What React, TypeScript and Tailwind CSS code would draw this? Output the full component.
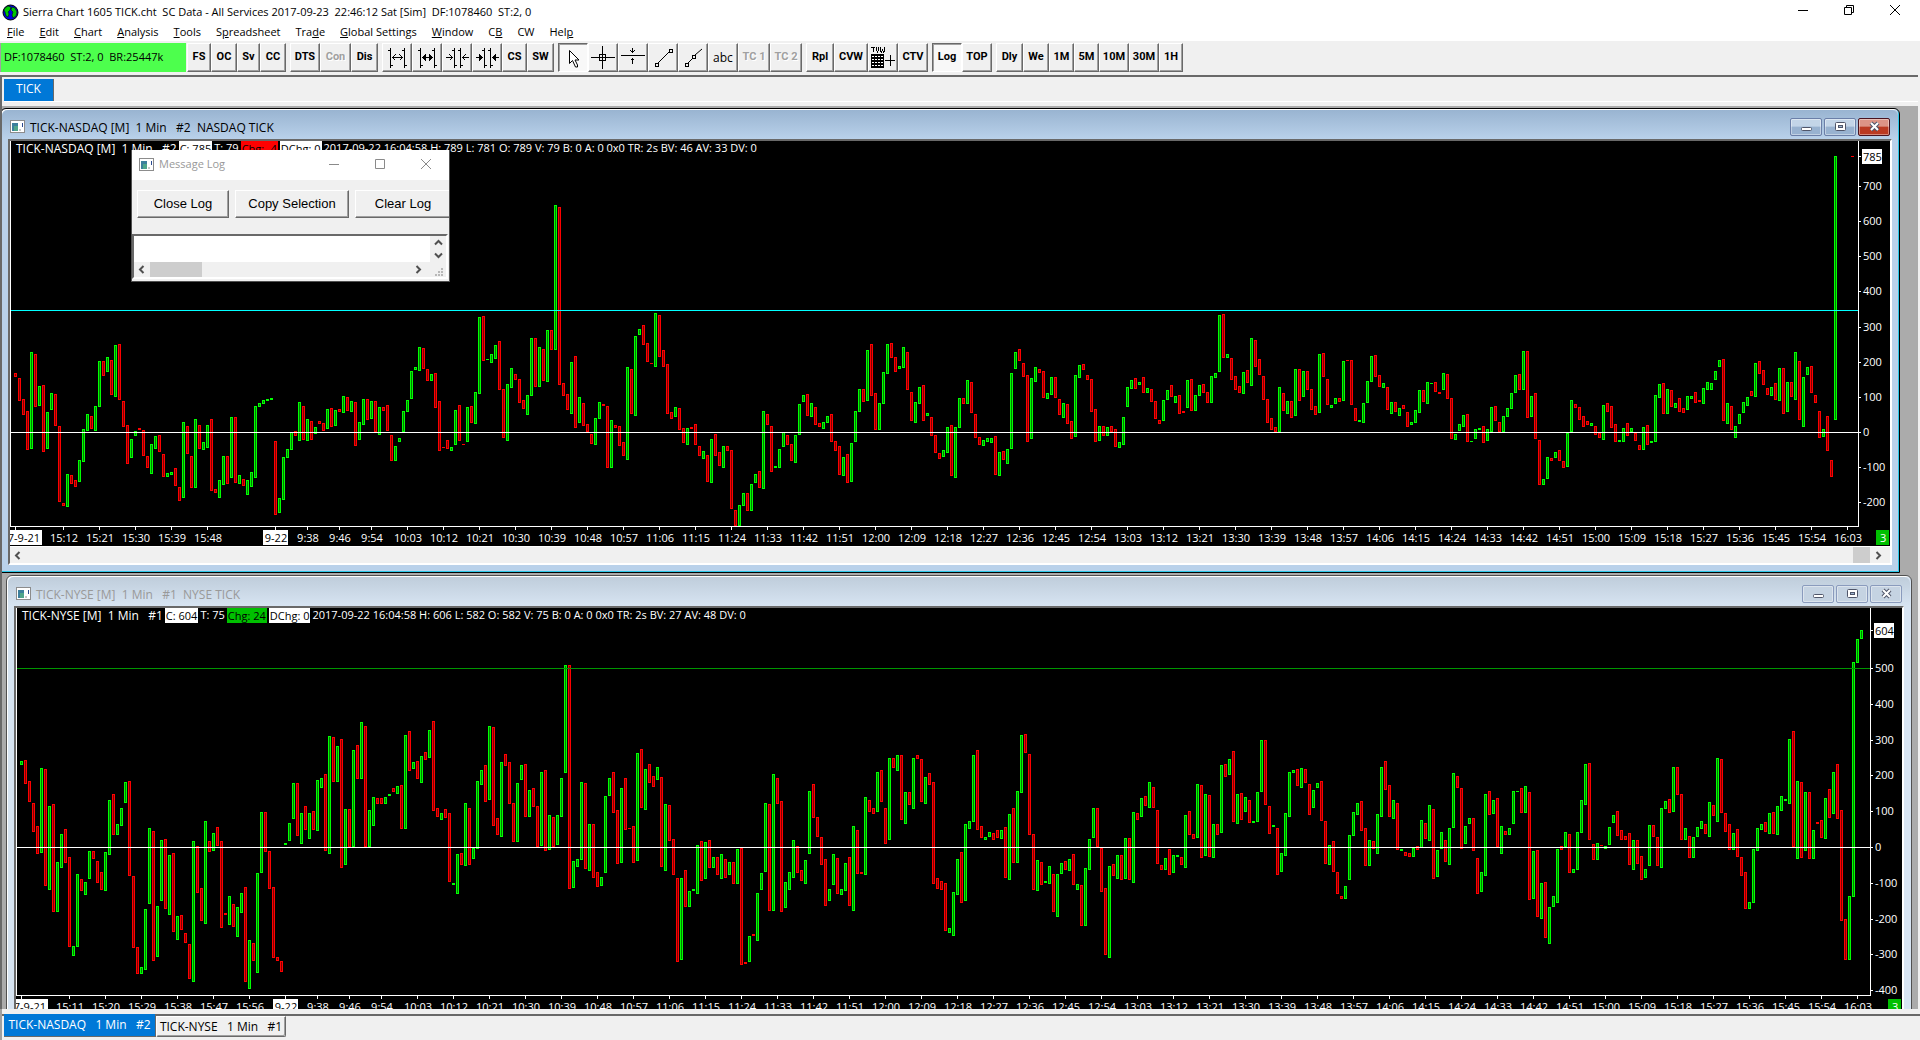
import type { ReactNode } from 'react'

type Session = { zero: number; bars: string }
type Label = { at: number; text: string; boxed?: boolean }

// Each bar is colour + high:low in thirds of a pixel, measured against the zero level of its session
const nasdaq: Session[] = [
  {
    zero: 396,
    bars: `r219:231 r234:303 r297:345 r333:450 g156:447 r162:321 g258:318 r255:456 g336:447 g279:330
      r282:378 r378:606 r609:618 g522:621 r525:552 r540:561 g480:546 g387:486 g342:393 r348:387
      g318:393 g183:321 r183:228 g171:216 r180:285 g135:291 r132:300 r303:381 r375:492 g417:474
      g393:408 r384:390 r390:468 r468:504 g432:522 g408:447 r405:456 r462:531 g519:531 g516:525
      r504:558 r561:603 g366:594 r378:462 r468:564 g357:564 r375:447 g426:450 g375:444 r357:573
      r567:579 g540:594 g468:555 r468:552 g351:534 r351:549 g525:552 r537:558 g540:585 g516:561
      g318:534 g309:321 g300:312 g297:303 g294:300 r423:645 g594:639 g471:600 g447:474 g396:450
      r393:408 g306:423 r318:420 g357:423 r363:420 g381:402 r363:372 r369:393 g327:387 r324:381
      g330:378 r327:336 g288:339 r291:333 g303:336 r306:438 g366:420 g297:375 r297:360 g303:357
      r303:396 g321:405 r321:333 r315:393 r405:483 g438:483 g414:426 g333:396 g300:336 g213:297
      g201:210 g141:213 r144:207 r207:243 g222:243 r219:324 r303:453 r441:444 r420:447 g441:453
      g330:435 r315:423 r432:435 g321:426 r318:369 g276:372 g51:282 r48:183`,
  },
  {
    zero: 726,
    bars: `g507:510 g492:519 g465:507 r453:600 r597:744 g582:753 g534:594 r552:570 r567:639 r630:657
      g615:675 g444:618 r444:591 g471:591 r477:573 g420:576 r420:480 g45:480 r51:585 r579:618
      r612:660 g516:672 r498:714 g621:699 r639:708 r702:726 r732:762 g684:765 g636:687 r642:648
      r648:834 g690:834 r705:714 r708:768 r756:798 g531:810 r537:672 g438:678 g417:435 r405:465
      r459:516 r519:522 g369:531 r375:501 r480:531 r522:672 r666:687 g651:681 r654:720 r714:759
      g714:765 r711:717 r702:765 r768:798 g783:807 r795:876 g747:879 r732:798 r786:828 g768:834
      r768:783 r780:957 r960:1008 g945:1008 g909:948 r909:963 g882:963 g852:879 r843:894 g663:897
      r672:705 r708:846 g828:834 g777:834 g726:771 r735:765 r762:813 g735:819 g642:735 g615:636
      r612:678 g639:681 r651:705 r699:711 g696:717 g678:699 r672:756 r753:783 r768:855 g801:858
      r792:879 g759:876 g663:756 g597:666 r597:636 g480:633 r462:618 r609:720 g639:720 g546:642
      g462:552 r459:504 r501:546 g528:537 g471:534 r486:600 r606:693 g636:699 g591:642 r585:693
      g669:678 r681:738 r735:789 r789:807 g780:801 g711:789 r705:858 g711:864 g624:714`,
  },
  {
    zero: 426,
    bars: `r324:342 g270:342 r276:369 r372:444 r441:465 g450:468 g444:456 g444:459 r438:555 g486:558
      r483:510 g477:522 g249:477 g186:237 r177:213 r219:261 r255:456 g264:447 g231:276 r237:249
      r243:324 g309:327 g261:315 r261:324 r327:375 g339:384 r342:402 r393:447 g255:441 g225:264
      r222:240 r255:270 r267:366 r357:456 g408:453 r408:438 g411:438 r408:426 r417:471 g456:474
      g381:465 g291:351 g270:297 r264:297 g276:285 r261:309 g294:309 r297:336 r333:387 r390:402
      g330:393 g300:330 r285:321 g318:339 r315:372 r363:369 g270:354 r267:363 g315:363 g285:318
      r282:309 r306:339 g258:339 g249:264 g75:246 r72:204 g192:204 r204:270 r258:300 r288:309
      g246:312 r240:279 g144:288 r150:231 r207:255 r258:330 r327:399 r384:420 r411:426 g291:426
      r309:363 g333:372 r333:384 g237:378 r237:333 g243:321 r243:300 r297:360 r348:375 g192:369
      r189:261 r267:345 g345:354 g324:342 r324:336 g213:333 r210:213 r210:345 r354:393 g390:396
      g339:399 g273:339 g198:276 r195:261 r255:291 g279:294 r291:360 g336:372 r336:366 g354:378
      r345:357 r366:411 g396:405 g360:399 g300:369 r300:336 g276:342 g279:282 r276:306 r306:312
      g249:300 r252:327 r324:447 g432:450 g402:423 g375:411 r372:456 g453:456 g417:447 g414:420
      r408:459 g417:453 g351:426 r348:393 r396:426 g378:426 g354:381 g309:357 g255:309 r252:300
      g183:300 r183:384 g318:381 r309:447 r450:585 g567:585 g501:567 r504:513 g486:504 r480:513
      r513:534 g429:531 g330:426 r342:354 r351:390 r378:411 r393:405 g399:408 r408:435 r429:444
      g345:450 r339:366 r348:414 r402:456 g450:456 g414:456 r399:438 g414:426 r429:453 r465:480
      g411:480 r405:465 g453:459 g315:456 g282:324 r279:372 g297:372 r300:351 g339:354 r324:366
      r354:369 g318:360 g318:327 r306:339 r330:336 g294:342 g276:300 g279:300 g243:270 g210:231
      r207:393 g339:402 r348:420 g408:444 g372:402 g336:369 g321:348 r303:318 g219:321 r213:252
      r240:285 r294:315 g291:318 r279:330 g234:333 r234:372 g276:366 r276:321 g186:330 r213:390
      g261:411 g231:255 r228:309 r315:339 r363:444 g417:441 r378:483 r510:561 g-402:390`,
  },
]

const nyse: Session[] = [
  {
    zero: 471,
    bars: `g213:225 r210:282 r273:336 r339:426 r408:492 g234:489 r237:588 g348:600 r342:666 g516:666
      g432:534 r417:519 r501:771 g768:798 g552:771 r567:603 g576:615 g483:567 r483:507 r513:579
      r546:600 g486:603 g330:495 r312:435 g402:435 g354:408 g276:339 r273:558 r558:774 r771:852
      g831:852 g657:840 g414:642 r423:813 g648:801 g450:633 r447:657 g495:675 r489:726 g678:750
      r675:720 r729:759 r762:867 g453:876 r468:609 r594:693 g393:702 r453:486 g429:483 r411:468
      r453:714 r669:675 g618:705 r642:711 g651:741 g609:669 r591:876 g750:897 r759:813 g549:849
      g366:549 r366:486 r483:597 r591:804 r801:813 r813:846 g459:465 g399:453 g279:387 r279:438
      g369:462 r348:420 g369:447 r363:420 g270:423 g264:294 r252:483 g138:492 r141:276 g168:276
      r147:534 g357:525 r357:471 g180:471 r165:267 g96:267 r108:471 g360:471 g321:408 r324:342
      r324:342 g321:342 g312:318 r294:306 g288:312 r285:417 g135:417 r123:243 g216:237 r213:267
      g198:279 r186:210 g120:204 r93:363 r354:381 g369:390 r357:384 r369:576 g579:585 g492:612
      r489:525 g339:528 r354:525 g474:507 g273:477 g240:285`,
  },
  {
    zero: 591,
    bars: `r345:456 g228:450 r231:528 r504:555 g336:561 r312:348 r336:462 r459:576 g399:576 g345:390
      r342:501 g420:501 r414:471 r468:591 g366:588 r360:603 g495:600 r501:591 g495:585 g384:501
      g45:369 r45:717 g633:714 g627:651 g396:630 r399:657 g522:663 r522:684 r666:711 g681:708
      g438:669 g384:438 r366:489 r480:642 g414:639 r384:540 r534:537 r528:639 g309:633 r297:474
      g357:480 r342:399 r378:411 g351:390 r381:651 g462:663 r465:573 r567:675 r684:936 g684:930
      r660:771 g723:771 g717:723 g585:732 r573:693 g576:687 r570:654 g621:654 r621:675 g612:687
      r627:684 g636:675 r636:702 g597:702 r594:945 r936:942 g858:936 r852:858 g729:873 g669:720
      g459:666 r462:783 g372:783 r384:462 r453:786 g696:774 g666:720 g570:684 r588:669 r660:693
      g630:702 g423:612 r402:504 r501:561 r561:645 r627:768 g717:753 g612:705 r624:732 g717:735
      g639:723 r621:768 g528:783 r540:672 r666:672 g441:675 r450:486 r474:492 g366:486 r360:456
      r474:582 g324:570 r324:354 g315:363 r315:510 g426:522 r426:465 g324:477 r315:327 r327:456
      g381:462 r369:405 r396:702 r684:717 r693:720 r699:843 g834:849 g726:858 g627:735`,
  },
  {
    zero: 471,
    bars: `r486:639 g402:633 g393:417 g195:396 r180:420 r408:444 g441:450 g426:441 r429:450 r420:444
      g420:447 r411:564 g372:570 r354:519 g303:519 g135:309 r132:189 r192:435 r432:600 g510:603
      r516:585 g573:579 g528:582 r552:666 g552:681 g519:552 r513:540 g507:543 r492:585 g582:600
      r585:708 g534:708 g447:540 g354:444 r354:471 r474:606 r594:795 g528:804 r522:558 g495:567
      r495:570 g444:567 r444:570 g366:579 r369:390 g324:381 r318:348 g276:354 r291:354 r360:522
      r525:540 g504:540 r477:555 g495:549 g495:501 r501:525 g375:534 r363:435 r432:447 g282:444
      r285:504 g312:498 r315:501 g402:504 r402:435 g225:429 r222:261 g207:255 r183:396 g312:402
      r309:390 g321:366 r330:399 g393:399 g306:396 g150:306 r150:345 r348:432 g405:411 r414:555
      g489:546 g369:498 g246:381 g240:249 r237:288 g234:294 r237:279 r282:375 g300:354 g279:294
      r273:393 r393:522 g465:525 r453:546 r546:612 r618:627 g588:627 g435:570 g366:438 g339:375
      r333:423 r414:528 g450:528 r453:477 g372:492 g231:381 r213:300 r285:381 g330:387 r339:480
      g477:483 r486:498 r489:501 g474:501 r468:480 g390:474 r399:447 g345:453 r357:567 g480:561`,
  },
  {
    zero: 831,
    bars: `g786:837 r810:876 g774:885 g609:774 r618:654 r654:837 g768:822 g744:762 r744:843 r864:972
      g906:966 g672:918 r663:735 g690:732 r684:831 g768:852 r783:795 g774:795 g663:762 g663:666
      r654:729 g648:729 r666:990 g843:987 r840:1041 g939:1047 r936:1104 g1011:1122 g978:1011 g837:999
      r828:840 g786:831 r792:909 g897:909 g786:900 g690:789 g582:705 r579:810 r822:870 g819:870
      r825:828 g828:837 g771:825 g735:759 r723:798 r780:810 r798:810 r789:885 g810:900 r810:882
      r858:930 g897:924 g765:888 r765:801 r801:888 g714:894 g693:717 r687:729 g591:726 r591:675
      r672:810 g774:810 r798:864 g801:864 g771:801 g753:777 r762:792 g696:801 r705:738 g564:756
      r567:729 r729:786 r762:840 g789:840 r777:861 r861:918 r906:1017 g996:1017 g837:999 g774:843
      g762:780 r756:786 g729:792 r726:792 g708:795 g678:723 g687:693 g507:702 r483:831 g633:867
      r636:864 g666:843 r666:867 g780:867 r756:762 r750:804 g684:807 r657:744 g606:732 r582:747
      r720:1053 r1047:1170 g978:1170 g276:981 g207:279 g180:207`,
  },
]

// Every ninth minute from 10:03 to 16:03
function sessionLabels(first: number): Label[] {
  return Array.from({ length: 41 }, (_, i) => {
    const minutes = 603 + i * 9
    const mm = String(minutes % 60).padStart(2, '0')
    return { at: first + i * 9, text: `${Math.floor(minutes / 60)}:${mm}` }
  })
}

const nasdaqTimes: Label[] = [
  { at: 12, text: '15:12' },
  { at: 21, text: '15:21' },
  { at: 30, text: '15:30' },
  { at: 39, text: '15:39' },
  { at: 48, text: '15:48' },
  { at: 65, text: '9-22', boxed: true },
  { at: 73, text: '9:38' },
  { at: 81, text: '9:46' },
  { at: 89, text: '9:54' },
  ...sessionLabels(98),
]

const nyseTimes: Label[] = [
  { at: 12, text: '15:11' },
  { at: 21, text: '15:20' },
  { at: 30, text: '15:29' },
  { at: 39, text: '15:38' },
  { at: 48, text: '15:47' },
  { at: 57, text: '15:56' },
  { at: 66, text: '9-22', boxed: true },
  { at: 74, text: '9:38' },
  { at: 82, text: '9:46' },
  { at: 90, text: '9:54' },
  ...sessionLabels(99),
]

function barPaths(sessions: Session[], zeroY: number, clip: number) {
  const paths = { g: '', gIn: '', r: '', rIn: '' }
  let x = 4
  for (const session of sessions) {
    for (const bar of session.bars.split(/\s+/)) {
      const color = bar[0] as 'g' | 'r'
      const [hi, lo] = bar.slice(1).split(':').map(Number)
      const top = zeroY + Math.round((hi - session.zero) / 3)
      const bottom = Math.min(clip, zeroY + Math.round((lo - session.zero) / 3))
      paths[color] += `M${x} ${top}h3V${bottom}h-3z`
      if (bottom - top > 2) {
        paths[color === 'g' ? 'gIn' : 'rIn'] += `M${x + 1} ${top + 1}h1V${bottom - 1}h-1z`
      }
      x += 4
    }
  }
  return paths
}

type ChartProps = {
  name: string
  sessions: Session[]
  times: Label[]
  zeroY: number
  axisY: number
  levelY: number
  levelColor: string
  step: number
  prices: number[]
  last: number
  lastY: number
  marker?: number
  header: ReactNode
}

function Chart(props: ChartProps) {
  const { name, sessions, times, zeroY, axisY, levelY, levelColor, step, prices, last, lastY, marker, header } = props
  const bars = barPaths(sessions, zeroY, axisY)

  return (
    <div className="relative flex h-[405px] shrink-0 overflow-hidden bg-black text-[11px] text-white">
      <svg
        role="img"
        aria-label={name}
        shapeRendering="crispEdges"
        className="h-full min-w-0 flex-1 overflow-visible"
      >
        <path d={bars.g} fill="#00ff00" />
        <path d={bars.gIn} fill="#008000" />
        <path d={bars.r} fill="#ff0000" />
        <path d={bars.rIn} fill="#800000" />
        {marker && <rect x="99.6%" y={marker} width="3" height="1" fill="#ff0000" />}
        <rect y={levelY} width="100%" height="1" fill={levelColor} />
        <rect y={zeroY} width="100%" height="1" fill="#fff" />
        <rect width="1" height={axisY} fill="#fff" />
        <rect y={axisY} width="100%" height="1" fill="#fff" />
        <rect x="5" y={axisY} width="1" height="4" fill="#fff" />
        <rect y={axisY + 4} width="32" height="15" fill="#fff" />
        <text x="30" y={axisY + 16} textAnchor="end" fill="#000">
          2017-9-21
        </text>
        {times.map((t) => (
          <g key={t.at}>
            <rect x={t.at * 4 + 5} y={axisY} width="1" height="4" fill="#fff" />
            {t.boxed && <rect x={t.at * 4 - 7} y={axisY + 4} width="25" height="15" fill="#fff" />}
            <text x={t.at * 4 + 6} y={axisY + 16} textAnchor="middle" fill={t.boxed ? '#000' : '#fff'}>
              {t.text}
            </text>
          </g>
        ))}
      </svg>
      <svg shapeRendering="crispEdges" className="h-full w-8 shrink-0">
        <rect width="1" height={axisY + 1} fill="#fff" />
        {prices.map((p) => {
          const y = zeroY - Math.round((p / 100) * step)
          return (
            <g key={p}>
              <rect x="1" y={y} width="2" height="1" fill="#fff" />
              <text x="5" y={y + 4} fill="#fff">
                {p}
              </text>
            </g>
          )
        })}
        <rect x="1" y={lastY} width="2" height="1" fill="#fff" />
        <rect x="4" y={lastY - 7} width="20" height="15" fill="#fff" />
        <text x="5" y={lastY + 5} fill="#000">
          {last}
        </text>
        <rect x="18" y={axisY + 4} width="13" height="15" fill="#00c000" />
        <text x="22" y={axisY + 16} fill="#fff">
          3
        </text>
      </svg>
      <div className="absolute top-0 left-1.5 flex h-[15px] items-center gap-0.5 whitespace-pre">{header}</div>
    </div>
  )
}

function Tag({ className, children }: { className: string; children: ReactNode }) {
  return <span className={`h-[15px] px-px leading-[15px] ${className}`}>{children}</span>
}

function WindowIcon() {
  return (
    <svg width="15" height="13" viewBox="0 0 15 13" shapeRendering="crispEdges" className="shrink-0">
      <rect x="0.5" y="0.5" width="14" height="12" fill="#fff" stroke="#8c8c8c" />
      <rect x="2" y="3" width="6" height="8" fill="#3c7f9c" />
      <rect x="4" y="6" width="4" height="5" fill="#4fa58a" />
      <rect x="9" y="9" width="2" height="2" fill="#c8c8c8" />
      <rect x="12" y="3" width="1" height="4" fill="#2a4a90" />
    </svg>
  )
}

const captionGlyphs = {
  Minimize: <rect x="3.5" y="8.5" width="10" height="3" rx="1" fill="#fff" stroke="#50566a" />,
  Maximize: (
    <>
      <rect x="3.5" y="3.5" width="10" height="8" rx="1" fill="#fff" stroke="#50566a" />
      <rect x="6.5" y="6.5" width="4" height="2" fill="#9db5d0" stroke="#50566a" />
    </>
  ),
  Close: (
    <>
      <path d="M5 4l7 7M12 4l-7 7" stroke="#50566a" strokeWidth="4" />
      <path d="M5 4l7 7M12 4l-7 7" stroke="#fff" strokeWidth="2" />
    </>
  ),
}

function CaptionButtons({ active }: { active: boolean }) {
  return (
    <div className="ml-auto flex gap-0.5">
      {(['Minimize', 'Maximize', 'Close'] as const).map((label) => {
        let look = 'border-[#8a9bbd] bg-[#c5d3e2]'
        if (active) look = 'border-[#6b7fa8] bg-linear-to-b from-[#c3d5e8] from-45% to-[#98b2d0] to-50%'
        if (active && label === 'Close') look = 'border-[#4a1420] bg-linear-to-b from-[#dd9486] from-45% to-[#bb3a22] to-50%'
        return (
          <button
            key={label}
            aria-label={label}
            className={`flex h-[18px] w-8 items-center justify-center rounded-xs border inset-shadow-[0_0_0_1px_#ffffff66] ${look}`}
          >
            <svg width="17" height="15" viewBox="0 0 17 15">
              {captionGlyphs[label]}
            </svg>
          </button>
        )
      })}
    </div>
  )
}

function Chevron({ d }: { d: string }) {
  return (
    <svg width="9" height="9" viewBox="0 0 9 9">
      <path d={d} fill="none" stroke="#505050" strokeWidth="2" />
    </svg>
  )
}

const chevrons = {
  left: 'M6.5 1L3 4.5 6.5 8',
  right: 'M2.5 1L6 4.5 2.5 8',
  up: 'M1 6.5L4.5 3 8 6.5',
  down: 'M1 2.5L4.5 6 8 2.5',
}

function Scrollbar() {
  return (
    <div className="flex h-[17px] items-center border-t border-white bg-[#f0f0f0] px-[3px]">
      <button aria-label="Scroll left">
        <Chevron d={chevrons.left} />
      </button>
      <div className="ml-auto h-4 w-[17px] bg-[#cdcdcd]" />
      <button aria-label="Scroll right" className="px-1">
        <Chevron d={chevrons.right} />
      </button>
    </div>
  )
}

const raised = 'border border-t-white border-l-white border-r-[#696969] border-b-[#696969] shadow-[inset_-1px_-1px_0_#a0a0a0]'
const sunken = 'border border-t-[#696969] border-l-[#696969] border-r-white border-b-white shadow-[inset_1px_1px_0_#a0a0a0] bg-[#f8f8f8]'

type Tool = { label: string; width: string; icon?: ReactNode; off?: boolean; on?: boolean; plain?: boolean }

const icon = (children: ReactNode) => (
  <svg width="26" height="25" viewBox="0 0 26 25" fill="none" stroke="#000" shapeRendering="crispEdges">
    {children}
  </svg>
)

const tools: Tool[][] = [
  [
    { label: 'FS', width: 'w-6' },
    { label: 'OC', width: 'w-[26px]' },
    { label: 'Sv', width: 'w-[23px]' },
    { label: 'CC', width: 'w-[26px]' },
  ],
  [
    { label: 'DTS', width: 'w-[30px]' },
    { label: 'Con', width: 'w-[31px]', off: true },
    { label: 'Dis', width: 'w-[27px]' },
  ],
  [
    {
      label: 'Increase bar spacing',
      width: 'w-[30px]',
      icon: icon(<path d="M6.5 3v20M20.5 3v20M4 5.5h2M18 5.5h2M7 20.5h2M21 20.5h2M8 12.5h11M11.5 9.5l-3 3 3 3M15.5 9.5l3 3-3 3" />),
    },
    {
      label: 'Increase bar width',
      width: 'w-[30px]',
      icon: icon(
        <>
          <path d="M6.5 3v20M20.5 3v20M4 5.5h2M18 5.5h2M7 20.5h2M21 20.5h2M8 12.5h11" />
          <path d="M8.5 12.5l3-3v6zM18.5 12.5l-3-3v6z" fill="#000" />
        </>
      ),
    },
    {
      label: 'Decrease bar spacing',
      width: 'w-[30px]',
      icon: icon(<path d="M10.5 3v20M16.5 3v20M8 5.5h2M14 5.5h2M11 20.5h2M17 20.5h2M2 12.5h7M18 12.5h7M5.5 9.5l3 3-3 3M21.5 9.5l-3 3 3 3" />),
    },
    {
      label: 'Decrease bar width',
      width: 'w-[30px]',
      icon: icon(
        <>
          <path d="M10.5 3v20M16.5 3v20M8 5.5h2M14 5.5h2M11 20.5h2M17 20.5h2M2 12.5h7M18 12.5h7" />
          <path d="M8.5 12.5l-3-3v6zM18.5 12.5l3-3v6z" fill="#000" />
        </>
      ),
    },
    { label: 'CS', width: 'w-[25px]' },
    { label: 'SW', width: 'w-[27px]' },
  ],
  [
    {
      label: 'Pointer',
      width: 'w-[30px]',
      on: true,
      icon: icon(<path d="M9.5 5.5v13l3-3 3 6.5h2v-2l-2.5-5h4z" fill="#fff" shapeRendering="auto" />),
    },
    { label: 'Crosshair', width: 'w-[30px]', icon: icon(<path d="M1 12.5h24M12.5 1v23M9.5 9.5h6v6h-6z" />) },
    {
      label: 'Horizontal line',
      width: 'w-[30px]',
      icon: icon(<path d="M1 10.5h24M12.5 3v5M10.5 5.5l2 2 2-2M12.5 13v6M10.5 15.5l2-2 2 2" />),
    },
    {
      label: 'Line',
      width: 'w-[30px]',
      icon: icon(
        <>
          <path d="M8 18L19 7" shapeRendering="auto" />
          <path d="M5.5 18.5h3v3h-3zM19.5 4.5h3v3h-3z" />
        </>
      ),
    },
    {
      label: 'Ray',
      width: 'w-[30px]',
      icon: icon(
        <>
          <path d="M8 18l5-5M15 10l7-6" shapeRendering="auto" />
          <path d="M5.5 18.5h3v3h-3zM12.5 10.5h3v3h-3z" />
        </>
      ),
    },
    { label: 'abc', width: 'w-[30px]', plain: true },
    { label: 'TC 1', width: 'w-8', off: true },
    { label: 'TC 2', width: 'w-8', off: true },
  ],
  [
    { label: 'Rpl', width: 'w-7' },
    { label: 'CVW', width: 'w-[34px]' },
    {
      label: 'Trade value window',
      width: 'w-[30px]',
      icon: icon(
        <>
          <path d="M1 2.5h4M3.5 3v4M6.5 2v3l1 2 1-2V2M10.5 2v4l1 1 1-2 1 2 1-1V2" />
          <path d="M1 9h13v14H1z" fill="#000" stroke="none" />
          <path d="M2 11.5h11M2 14.5h11M2 17.5h11M2 20.5h11" stroke="#fff" strokeDasharray="2 1" />
          <path d="M15 15.5h10M20.5 10v11" />
        </>
      ),
    },
    { label: 'CTV', width: 'w-[30px]' },
  ],
  [
    { label: 'Log', width: 'w-[30px]', on: true },
    { label: 'TOP', width: 'w-[30px]' },
  ],
  [
    { label: 'Dly', width: 'w-[27px]' },
    { label: 'We', width: 'w-[26px]' },
    { label: '1M', width: 'w-[25px]' },
    { label: '5M', width: 'w-[25px]' },
    { label: '10M', width: 'w-[30px]' },
    { label: '30M', width: 'w-[30px]' },
    { label: '1H', width: 'w-6' },
  ],
]

function Toolbar() {
  return (
    <div className="flex h-[34px] gap-px bg-[#f0f0f0] pt-0.5">
      <div className="flex h-[29px] w-[186px] items-center border-l border-[#a0a0a0] bg-[#4dff4d] pl-[3px] whitespace-pre">
        DF:1078460  ST:2, 0  BR:25447k
      </div>
      <div className="flex gap-1">
        {tools.map((group, i) => (
          <div key={i} className="flex">
            {group.map((tool) => (
              <button
                key={tool.label}
                aria-label={tool.label}
                disabled={tool.off}
                className={`flex h-[29px] items-center justify-center ${tool.width} ${tool.on ? sunken : raised} ${
                  tool.plain ? 'text-xs' : "font-['Roboto','Liberation_Sans',sans-serif] text-[11px] font-bold"
                } ${tool.off ? 'text-[#a0a0a0] [text-shadow:1px_1px_0_#fff]' : ''}`}
              >
                {tool.icon ?? tool.label}
              </button>
            ))}
          </div>
        ))}
      </div>
    </div>
  )
}

// The letter after "_" is the keyboard accelerator
const menus = ['_File', '_Edit', '_Chart', '_Analysis', '_Tools', 'S_preadsheet', 'Tra_de', '_Global Settings', '_Window', 'C_B', 'CW', 'Hel_p']

function MenuBar() {
  return (
    <nav className="flex h-[17px] items-center gap-[15px] bg-white pl-[7px]">
      {menus.map((menu) => {
        const [before, after = ''] = menu.split('_')
        return (
          <button key={menu}>
            {before}
            <u>{after[0]}</u>
            {after.slice(1)}
          </button>
        )
      })}
    </nav>
  )
}

function TitleBar() {
  return (
    <header className="flex h-6 items-center bg-white pl-0.5">
      <svg width="17" height="17" viewBox="0 0 17 17">
        <circle cx="8.5" cy="8.5" r="7.5" fill="#0000e0" stroke="#000" strokeWidth="1" />
        <path d="M3 4l3-2 3 1-1 3-2 2 1 2-1 3-2-1-1-4-1-2zM10 3l3 1 2 4-1 4-3 2-1-3 1-3-2-2z" fill="#00c800" stroke="#000" strokeWidth="0.5" />
      </svg>
      <h1 className="ml-1 whitespace-pre">
        Sierra Chart 1605 TICK.cht  SC Data - All Services 2017-09-23  22:46:12 Sat [Sim]  DF:1078460  ST:2, 0
      </h1>
      <div className="ml-auto flex gap-9 pr-5 pb-1">
        {[
          ['Minimize', 'M0 5.5h10'],
          ['Restore', 'M.5 2.5h7v7h-7zM2.5 2V.5h7v7H8'],
          ['Close', 'M0 0l10 10M10 0L0 10'],
        ].map(([label, d]) => (
          <button key={label} aria-label={label}>
            <svg width="10" height="10" viewBox="0 0 10 10" fill="none" stroke="#000">
              <path d={d} />
            </svg>
          </button>
        ))}
      </div>
    </header>
  )
}

function ChartWindow({ title, active, className, children }: { title: string; active: boolean; className: string; children: ReactNode }) {
  return (
    <section
      className={`absolute rounded-t-md border ${className} ${
        active
          ? 'border-black bg-[#b9d1ea] shadow-[inset_-1px_-1px_0_#2cc8e8,inset_1px_1px_0_#fff]'
          : 'border-[#505050] bg-[#d7e4f2] shadow-[inset_1px_1px_0_#fff]'
      }`}
    >
      <div
        className={`mx-px mt-px flex h-[29px] items-center rounded-t-md bg-linear-to-b px-2 pt-1 text-xs ${
          active ? 'from-[#99b4d1] to-[#b9d1ea]' : 'from-[#bfcddb] to-[#d7e4f2] text-[#999]'
        }`}
      >
        <WindowIcon />
        <h2 className="ml-[5px] pt-0.5 whitespace-pre">{title}</h2>
        <CaptionButtons active={active} />
      </div>
      <div className="mx-[7px] border-2 border-t-[#696969] border-r-white border-b-white border-l-[#696969]">{children}</div>
    </section>
  )
}

function MessageLog() {
  return (
    <section className="absolute top-11 left-[129px] flex h-[132px] w-[319px] flex-col overflow-hidden border border-t-0 border-[#505050] bg-[#f0f0f0]">
      <div className="flex h-[30px] shrink-0 items-center bg-white pr-[18px] pb-0.5 pl-[7px] text-[#999]">
        <WindowIcon />
        <h2 className="ml-[5px]">Message Log</h2>
        <div className="ml-auto flex gap-9">
          {[
            ['Minimize', 'M0 5.5h10'],
            ['Maximize', 'M.5.5h9v9h-9z'],
            ['Close', 'M0 0l10 10M10 0L0 10'],
          ].map(([label, d]) => (
            <button key={label} aria-label={`${label} log`}>
              <svg width="10" height="10" viewBox="0 0 10 10" fill="none" stroke="#8a8a8a">
                <path d={d} />
              </svg>
            </button>
          ))}
        </div>
      </div>
      <div className="flex gap-1.5 py-2.5 pl-[5px] font-['Liberation_Sans',sans-serif] text-[13px]">
        <button className={`h-7 w-[92px] shrink-0 ${raised}`}>Close Log</button>
        <button className={`h-7 w-[114px] shrink-0 ${raised}`}>Copy Selection</button>
        <button className={`h-7 w-[96px] shrink-0 ${raised}`}>Clear Log</button>
      </div>
      <div className="mt-1.5 mr-px mb-1 flex flex-1 flex-col border-2 border-t-[#696969] border-r-white border-b-white border-l-[#696969]">
        <div className="flex h-[26px]">
          <textarea aria-label="Log messages" rows={1} className="min-w-0 flex-1 resize-none bg-white outline-none" />
          <div className="flex w-4 flex-col items-center justify-around">
            <Chevron d={chevrons.up} />
            <Chevron d={chevrons.down} />
          </div>
        </div>
        <div className="flex h-[15px] items-center pl-[3px]">
          <Chevron d={chevrons.left} />
          <div className="ml-1 h-full w-[52px] bg-[#cdcdcd]" />
          <div className="mr-2 ml-auto flex">
            <Chevron d={chevrons.right} />
          </div>
          <svg width="9" height="9" viewBox="0 0 9 9" className="mr-0.5 ml-1 self-end">
            <path d="M6 0h2v2H6zM3 3h2v2H3zM6 3h2v2H6zM0 6h2v2H0zM3 6h2v2H3zM6 6h2v2H6z" fill="#b8b8b8" />
          </svg>
        </div>
      </div>
    </section>
  )
}

export default function App() {
  return (
    <div className="flex h-screen flex-col overflow-hidden bg-[#f0f0f0] font-['Open_Sans','Noto_Sans',sans-serif] text-[11px] text-black">
      <TitleBar />
      <MenuBar />
      <Toolbar />

      <div className="mr-0.5 flex min-h-0 flex-1 flex-col border-t-2 border-l-2 border-[#696969]">
        <div className="h-[29px] shrink-0 pt-0.5 pl-0.5">
          <div className="flex h-[23px] border-b border-white">
            <button className="h-[22px] w-[50px] border-r border-[#696969] bg-[#0078d7] pb-0.5 text-xs text-white">TICK</button>
          </div>
        </div>

        <main className="relative min-h-0 flex-1 overflow-hidden bg-[#ababab]">
          <ChartWindow
            title="TICK-NASDAQ [M]  1 Min   #2  NASDAQ TICK"
            active
            className="top-0.5 right-[18px] -left-0.5 h-[465px]"
          >
            <Chart
              name="NASDAQ TICK one minute bars"
              sessions={nasdaq}
              times={nasdaqTimes}
              zeroY={291}
              axisY={385}
              levelY={169}
              levelColor="#00ffff"
              step={35.15}
              prices={[700, 600, 500, 400, 300, 200, 100, 0, -100, -200]}
              last={785}
              lastY={15}
              marker={15}
              header={
                <>
                  <span className="text-xs">TICK-NASDAQ [M]  1 Min   #2</span>
                  <Tag className="bg-white text-black">C: 785</Tag>
                  <span>T: 79</span>
                  <Tag className="bg-[#ff0000] text-black">Chg: -4</Tag>
                  <Tag className="bg-white text-black">DChg: 0</Tag>
                  <span>2017-09-22 16:04:58 H: 789 L: 781 O: 789 V: 79 B: 0 A: 0 0x0 TR: 2s BV: 46 AV: 33 DV: 0</span>
                </>
              }
            />
            <Scrollbar />
          </ChartWindow>

          <ChartWindow
            title="TICK-NYSE [M]  1 Min   #1  NYSE TICK"
            active={false}
            className="top-[469px] right-1.5 left-1 h-[465px]"
          >
            <Chart
              name="NYSE TICK one minute bars"
              sessions={nyse}
              times={nyseTimes}
              zeroY={239}
              axisY={387}
              levelY={60}
              levelColor="#009600"
              step={35.8}
              prices={[500, 400, 300, 200, 100, 0, -100, -200, -300, -400]}
              last={604}
              lastY={22}
              header={
                <>
                  <span className="text-xs">TICK-NYSE [M]  1 Min   #1</span>
                  <Tag className="bg-white text-black">C: 604</Tag>
                  <span>T: 75</span>
                  <Tag className="bg-[#00c000] text-black">Chg: 24</Tag>
                  <Tag className="bg-white text-black">DChg: 0</Tag>
                  <span>2017-09-22 16:04:58 H: 606 L: 582 O: 582 V: 75 B: 0 A: 0 0x0 TR: 2s BV: 27 AV: 48 DV: 0</span>
                </>
              }
            />
            <Scrollbar />
          </ChartWindow>

          <MessageLog />
        </main>
      </div>

      <footer className="h-[31px] shrink-0 border-l-2 border-[#a0a0a0] pt-[5px]">
        <div className="flex h-6 border-t-2 border-[#696969] pl-0.5 text-xs whitespace-pre">
          <button className="-mt-0.5 h-[23px] w-[152px] border-r border-b border-[#696969] bg-[#0078d7] text-white">
            TICK-NASDAQ   1 Min   #2
          </button>
          <button className={`h-[21px] w-[130px] rounded-b-xs ${raised}`}>TICK-NYSE   1 Min   #1</button>
        </div>
      </footer>
    </div>
  )
}
